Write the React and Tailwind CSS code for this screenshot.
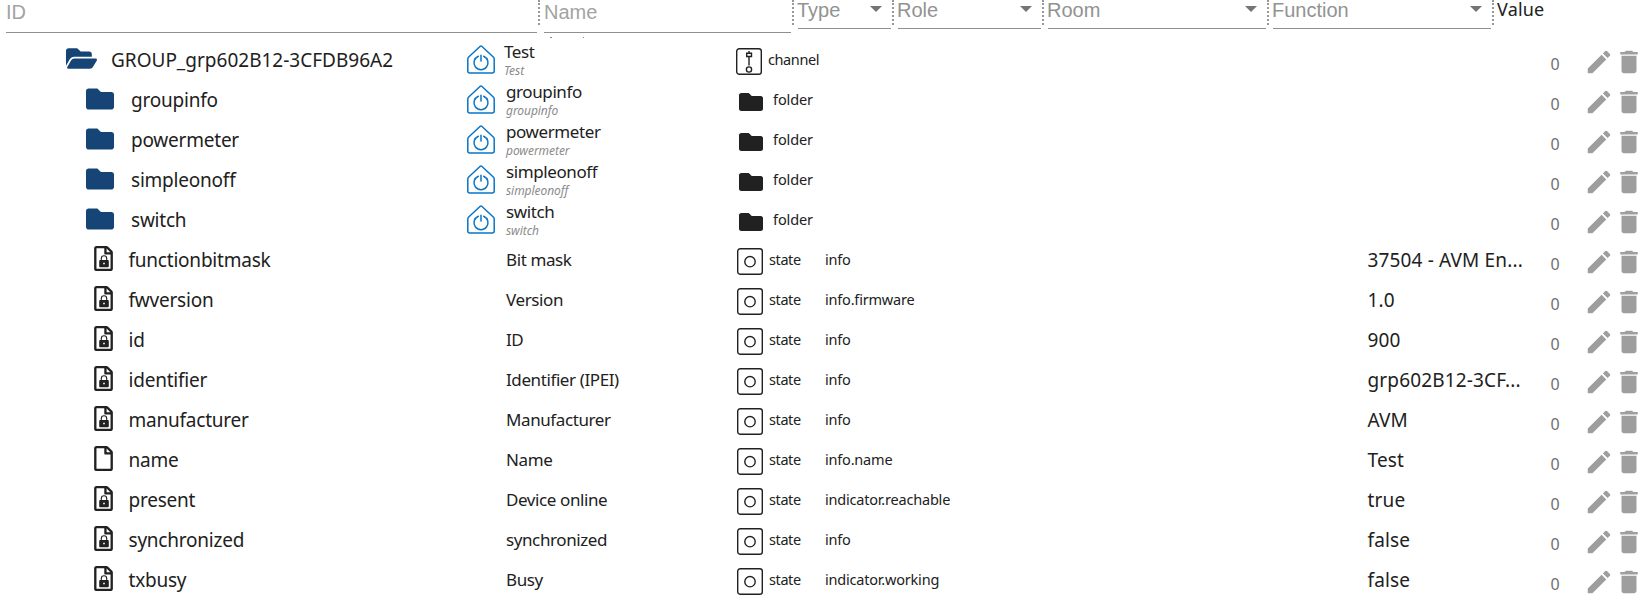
import { MdEdit, MdDelete } from "react-icons/md";
import { FaFolder, FaFolderOpen, FaRegFile } from "react-icons/fa";

const rows = [
  { kind: "group", id: "GROUP_grp602B12-3CFDB96A2", name: "Test", sub: "Test", type: "channel" },
  { kind: "folder", id: "groupinfo", name: "groupinfo", sub: "groupinfo", type: "folder" },
  { kind: "folder", id: "powermeter", name: "powermeter", sub: "powermeter", type: "folder" },
  { kind: "folder", id: "simpleonoff", name: "simpleonoff", sub: "simpleonoff", type: "folder" },
  { kind: "folder", id: "switch", name: "switch", sub: "switch", type: "folder" },
  { kind: "state", id: "functionbitmask", name: "Bit mask", type: "state", role: "info", value: "37504 - AVM En...", locked: true },
  { kind: "state", id: "fwversion", name: "Version", type: "state", role: "info.firmware", value: "1.0", locked: true },
  { kind: "state", id: "id", name: "ID", type: "state", role: "info", value: "900", locked: true },
  { kind: "state", id: "identifier", name: "Identifier (IPEI)", type: "state", role: "info", value: "grp602B12-3CF...", locked: true },
  { kind: "state", id: "manufacturer", name: "Manufacturer", type: "state", role: "info", value: "AVM", locked: true },
  { kind: "state", id: "name", name: "Name", type: "state", role: "info.name", value: "Test" },
  { kind: "state", id: "present", name: "Device online", type: "state", role: "indicator.reachable", value: "true", locked: true },
  { kind: "state", id: "synchronized", name: "synchronized", type: "state", role: "info", value: "false", locked: true },
  { kind: "state", id: "txbusy", name: "Busy", type: "state", role: "indicator.working", value: "false", locked: true },
];

function HouseIcon() {
  return (
    <svg viewBox="0 0 28 29" className="h-[29px] w-7 shrink-0" fill="none" stroke="#0b74c4" strokeWidth="1.5" strokeLinecap="round" strokeLinejoin="round">
      <path d="M13 1.5Q14 .6 15 1.5L26.3 12Q27.2 13 27.2 14V26Q27.2 28 25.2 28H2.8Q.8 28 .8 26V14Q.8 13 1.7 12Z" />
      <path d="M11.3 11.2A7 7 0 1 0 16.7 11.2M14 10.2V16" />
    </svg>
  );
}

function ChannelIcon() {
  return (
    <svg viewBox="0 0 26 27" className="h-[27px] w-[26px] shrink-0" fill="none" stroke="#212121" strokeWidth="1.4">
      <rect x=".7" y=".7" width="24.6" height="25.6" rx="2.6" />
      <path d="M13 3V5.5M13 8.5V17.5M10.7 5.2h4.8v3.3h-4.8z" />
      <circle cx="13" cy="21.5" r="2.6" />
    </svg>
  );
}

function StateIcon() {
  return (
    <svg viewBox="0 0 26 27" className="h-[27px] w-[26px] shrink-0" fill="none" stroke="#212121" strokeWidth="1.4">
      <rect x=".7" y=".7" width="24.6" height="25.6" rx="2.6" />
      <circle cx="13" cy="13.7" r="5.2" />
    </svg>
  );
}

function LockIcon() {
  return (
    <svg viewBox="0 0 10 13" className="absolute left-[4.5px] top-[9px] h-[13px] w-[10px]">
      <path d="M2.3 6V3.5a2.7 2.7 0 0 1 5.4 0V6" fill="none" stroke="#212121" strokeWidth="1.1" />
      <rect x=".2" y="5" width="9.6" height="7.3" rx="1" fill="#212121" />
      <rect x="4.2" y="7.7" width="1.6" height="1.6" fill="#fff" />
    </svg>
  );
}

function IdCell({ row }) {
  if (row.kind === "group")
    return (
      <div className="flex h-10 items-center pl-[66px]">
        <FaFolderOpen className="mb-[3px] size-[31px] shrink-0 text-[#164477]" />
        <span className="pl-[14px] pt-[1px] tracking-[0px]">{row.id}</span>
      </div>
    );
  if (row.kind === "folder")
    return (
      <div className="flex h-10 items-center pl-[86px]">
        <FaFolder className="mb-[3px] size-7 shrink-0 text-[#164477]" />
        <span className="pl-[17px] pt-[1px]">{row.id}</span>
      </div>
    );
  return (
    <div className="flex h-10 items-center pl-[94px]">
      <span className="relative mb-[3px] h-[25px] w-[19px] shrink-0">
        <FaRegFile className="h-[25px] w-[19px] text-[#212121]" />
        {row.locked && <LockIcon />}
      </span>
      <span className="pl-[15.5px] pt-[1px]">{row.id}</span>
    </div>
  );
}

function NameCell({ row }) {
  if (row.kind === "state") return <div className="h-10 pl-10 text-[17px] leading-10 tracking-[-0.4px]">{row.name}</div>;
  return (
    <div className="flex h-10 pl-px">
      <div className="pt-[5px]"><HouseIcon /></div>
      <div className={row.kind === "group" ? "pl-[9px]" : "pl-[11px]"}>
        <div className="mt-[1px] h-[22px] text-[17px] leading-[22px] tracking-[-0.4px]">{row.name}</div>
        <div className="h-4 text-xs italic leading-4 tracking-[-0.06px] text-[#8b8b8b]">{row.sub}</div>
      </div>
    </div>
  );
}

function TypeCell({ row }) {
  return (
    <div className={row.kind === "group" ? "flex h-10 pl-[3px]" : row.kind === "folder" ? "flex h-10 pl-[6px]" : "flex h-10 pl-1"}>
      <div className="pt-[7.5px]">
        {row.kind === "group" && <ChannelIcon />}
        {row.kind === "folder" && <FaFolder className="mt-[2px] size-6 text-[#212121]" />}
        {row.kind === "state" && <StateIcon />}
      </div>
      <span className={row.kind === "folder" ? "pl-[10px] text-[14.5px] leading-[39px] tracking-[-0.1px]" : "pl-[6px] text-[14.5px] leading-[39px] tracking-[-0.4px]"}>{row.type}</span>
    </div>
  );
}

function FilterField({ label, className, arrow = true }) {
  return (
    <div className={className}>
      <div className={arrow ? "flex h-[29px] items-start justify-between border-b border-[#8f8f8f] pr-[9px] leading-5 text-[#929292]" : "h-[33px] border-b border-[#8f8f8f] pt-[2px] leading-5 text-[#a3a3a3]"}>
        <span className={arrow ? "-ml-px" : ""}>{label}</span>
        {arrow && (
          <svg viewBox="0 0 12 6" className="mt-[6px] h-[6px] w-3 shrink-0"><path d="M0 0H12L6 6Z" fill="#757575" /></svg>
        )}
      </div>
    </div>
  );
}

function Divider() {
  return <div className="mr-1 ml-px h-[25px] w-0 border-l-2 border-dotted border-[#999]" />;
}

export default function App() {
  return (
    <div className="h-[605px] w-[1641px] overflow-hidden bg-white font-['Noto_Sans',sans-serif] text-[#212121]">
      <header className="relative flex h-10 items-start pl-[6px] font-['Liberation_Sans',sans-serif] text-xl">
        <FilterField label="ID" className="w-[531px]" arrow={false} />
        <Divider />
        <FilterField label="Name" className="w-[247px]" arrow={false} />
        <Divider />
        <FilterField label="Type" className="w-[93px]" />
        <Divider />
        <FilterField label="Role" className="w-[143px]" />
        <Divider />
        <FilterField label="Room" className="w-[218px]" />
        <Divider />
        <FilterField label="Function" className="w-[218px]" />
        <Divider />
        <div className="-ml-px font-['Noto_Sans',sans-serif] text-lg leading-[19px] tracking-[0.2px]">Value</div>
        <div className="absolute left-[550px] top-[37px] h-px w-[2px] bg-[#888]" />
        <div className="absolute left-[583px] top-[37px] h-px w-px bg-[#888]" />
      </header>
      <main>
        {rows.map((row) => (
          <div key={row.id} className="grid h-10 grid-cols-[466px_267px_92px_542.5px_183px_33.5px_30px_30px] whitespace-nowrap text-[19px] tracking-[-0.22px]">
            <IdCell row={row} />
            <NameCell row={row} />
            <TypeCell row={row} />
            <div className="text-[14.5px] leading-[39px] tracking-[-0.2px]">{row.role}</div>
            <div className="leading-10 tracking-[0.15px]">{row.value}</div>
            <div className="text-[16px] leading-[48px] tracking-normal text-[#707070]">0</div>
            <MdEdit className="mt-[7px] size-[30px] text-[#9e9e9e]" />
            <MdDelete className="mt-[7px] size-[30px] text-[#9e9e9e]" />
          </div>
        ))}
      </main>
    </div>
  );
}
